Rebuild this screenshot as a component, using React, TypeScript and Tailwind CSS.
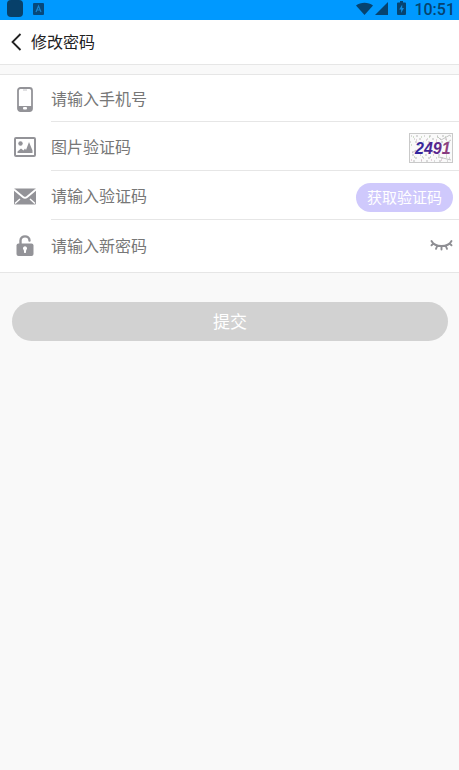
import { useId, useState } from 'react';
import type { ReactNode } from 'react';

function StatusBar() {
  return (
    <div className="flex h-5 items-center justify-between bg-[#0099ff] pr-1 pl-[7px] text-[#06436f]">
      <div className="flex h-full items-start gap-[10px]">
        <span className="h-[17px] w-4 rounded-[4px] bg-[#07406a]" />
        <svg className="mt-[3px]" width="11" height="12" viewBox="0 0 11 12" aria-hidden="true">
          <rect width="11" height="12" rx="1" fill="#07487a" />
          <path d="M3 9 5.500 3 8 9M4 7h3" fill="none" stroke="#1784cf" strokeWidth="1.200" />
        </svg>
      </div>
      <div className="flex h-full items-start">
        <svg className="mt-[2px]" width="17" height="13" viewBox="0 0 17 13" fill="currentColor" aria-hidden="true">
          <path d="M0 3.400C4.800-.3 12.200-.3 17 3.400L8.500 13z" />
        </svg>
        <svg className="mt-[2px] ml-[2px]" width="13" height="13" viewBox="0 0 13 13" fill="currentColor" aria-hidden="true">
          <path d="M13 0v13H0z" />
        </svg>
        <svg className="mt-px ml-[9px]" width="9" height="14" viewBox="0 0 9 14" aria-hidden="true">
          <path fill="currentColor" d="M3 0h3v1.500h2q1 0 1 1V13q0 1-1 1H1q-1 0-1-1V2.500q0-1 1-1h2z" />
          <path fill="#0d8be0" d="M5.200 3.500 2.200 8.400h1.900v3.600l2.900-5H5.200z" />
        </svg>
        <span className="ml-2 font-[Roboto,sans-serif] text-base leading-5 font-medium">10:51</span>
      </div>
    </div>
  );
}

function PhoneIcon() {
  return (
    <svg width="16" height="25" viewBox="0 0 16 25" aria-hidden="true">
      <rect x="1" y="1" width="14" height="23" rx="2.500" fill="#fff" stroke="#939398" strokeWidth="1.800" />
      <path d="M1 19h14v3q0 2-2 2H3q-2 0-2-2z" fill="#939398" />
      <rect x="6" y="20" width="4" height="2.500" rx="1" fill="#fff" />
      <path d="M6 3h4" stroke="#c4c4c8" />
    </svg>
  );
}

function PictureIcon() {
  return (
    <svg width="22" height="20" viewBox="0 0 22 20" aria-hidden="true">
      <rect x="1" y="1" width="20" height="18" rx="1" fill="none" stroke="#939398" strokeWidth="2" />
      <circle cx="6.500" cy="6.500" r="2.200" fill="#939398" />
      <path d="M3.500 16v-1.500l3.500-3 2.500 2 1.500-2 1 1.500 3-8 3.500 8.500V16z" fill="#939398" />
    </svg>
  );
}

function MailIcon() {
  return (
    <svg width="22" height="17" viewBox="0 0 22 17" aria-hidden="true">
      <rect y=".5" width="22" height="16" rx="1" fill="#939398" />
      <path d="M0 1.500l9 7.500q2 1.600 4 0l9-7.500" fill="none" stroke="#fff" strokeWidth="1.900" />
      <path d="M1 15.500l5-4.500M21 15.500l-5-4.500" stroke="#fff" strokeWidth="1.400" />
    </svg>
  );
}

function LockIcon() {
  return (
    <svg width="18" height="21" viewBox="0 0 18 21" aria-hidden="true">
      <path d="M4.500 9V5.500C4.500 0 13.500 0 13.500 5.500" fill="none" stroke="#939398" strokeWidth="2.400" strokeLinecap="round" />
      <rect x=".5" y="8.500" width="17" height="12.500" rx="2" fill="#939398" />
      <path d="M9 11.200a2.100 2.100 0 0 1 1.200 3.800L9.800 18H8.200L7.800 15A2.100 2.100 0 0 1 9 11.200z" fill="#fff" />
    </svg>
  );
}

function ClosedEyeIcon() {
  return (
    <svg width="23" height="12" viewBox="0 0 23 12" fill="none" stroke="#8e8e93" strokeWidth="1.900" strokeLinecap="round" aria-hidden="true">
      <path d="M1.500 2Q4 7 11.500 7T21.500 2M3.600 4.500 1.500 6.300M7.400 6.500 6 9.800M11.500 7v3.500M15.600 6.500 17 9.800M19.400 4.500l2.100 1.800" />
    </svg>
  );
}

function Captcha() {
  return (
    <svg width="44" height="30" viewBox="0 0 44 30" aria-hidden="true">
      <rect x=".5" y=".5" width="43" height="29" fill="#fafafa" stroke="#c9c9c9" />
      <g fill="none" strokeWidth="1">
        <path stroke="#b8b8b8" strokeDasharray="1 4 2 6" d="M2 3h40M5 6h36M1 9h40" />
        <path stroke="#b8b8b8" strokeDasharray="2 6 1 4" d="M3 22h38M6 25h36M4 28h36" />
        <path stroke="#a9c39c" strokeDasharray="1 7" d="M4 4h38M2 12h40M5 24h37" />
        <path stroke="#cda7b8" strokeDasharray="1 9" d="M7 7h34M3 19h38M2 27h40" />
        <path stroke="#c4c4c4" d="M28 3l4 4 9-5M35 11l7-4M30 24l12 3M3 20l4-3" />
      </g>
      <defs>
        <linearGradient id="captcha-ink">
          <stop offset="0" stopColor="#2b27a0" />
          <stop offset=".6" stopColor="#55248e" />
          <stop offset="1" stopColor="#a04878" />
        </linearGradient>
      </defs>
      <text x="6" y="21" fill="url(#captcha-ink)" className="font-['Liberation_Sans',sans-serif] text-base font-bold italic">
        2491
      </text>
    </svg>
  );
}

type FieldProps = {
  icon: ReactNode;
  label: string;
  type?: string;
  height?: string;
  last?: boolean;
  children?: ReactNode;
};

function Field({ icon, label, type = 'text', height = 'h-[49px]', last = false, children }: FieldProps) {
  const id = useId();
  return (
    <div className={`flex ${height}`}>
      <label htmlFor={id} aria-label={label} className="flex w-[51px] shrink-0 items-center justify-center pt-px pr-[2px]">
        {icon}
      </label>
      <div className={`flex min-w-0 flex-1 items-center pr-[6px] ${last ? '' : 'border-b border-[#e6e6e6]'}`}>
        <input
          id={id}
          type={type}
          placeholder={label}
          className="h-6 min-w-0 flex-1 bg-transparent text-base leading-6 text-[#333] outline-none placeholder:text-[#777]"
        />
        {children}
      </div>
    </div>
  );
}

export default function App() {
  const [visible, setVisible] = useState(false);
  return (
    <div className="min-h-screen bg-[#f9f9f9] font-['Noto_Sans_CJK_SC',sans-serif]">
      <StatusBar />
      <header className="flex h-[45px] items-center border-b border-[#e6e6e6] bg-white pl-[11px]">
        <button type="button" aria-label="返回" className="flex h-8 w-5 items-center">
          <svg width="11" height="18" viewBox="0 0 11 18" fill="none" stroke="#222" strokeWidth="1.800" aria-hidden="true">
            <path d="M9.500 1 1.500 9l8 8" />
          </svg>
        </button>
        <h1 className="pb-[2px] text-base leading-6 text-[#222]">修改密码</h1>
      </header>
      <form onSubmit={(event) => event.preventDefault()}>
        <div className="mt-[9px] border-y border-[#e6e6e6] bg-white pb-[3px]">
          <Field icon={<PhoneIcon />} label="请输入手机号" type="tel" height="h-[47px]" />
          <Field icon={<PictureIcon />} label="图片验证码">
            <button type="button" aria-label="刷新验证码" className="pt-[3px]">
              <Captcha />
            </button>
          </Field>
          <Field icon={<MailIcon />} label="请输入验证码">
            <div className="pt-[5px]">
              <button type="button" className="block h-[29px] rounded-full bg-[#cfc9fc] px-[11px] pb-px text-[15px] leading-6 text-white">
                获取验证码
              </button>
            </div>
          </Field>
          <Field icon={<LockIcon />} label="请输入新密码" type={visible ? 'text' : 'password'} last>
            <button type="button" aria-label="显示密码" onClick={() => setVisible(!visible)}>
              <ClosedEyeIcon />
            </button>
          </Field>
        </div>
        <div className="pt-[29px] pr-[11px] pl-3">
          <button type="submit" className="h-[39px] w-full rounded-full bg-[#d2d2d2] pb-[2px] text-[17px] leading-6 text-white">
            提交
          </button>
        </div>
      </form>
    </div>
  );
}
